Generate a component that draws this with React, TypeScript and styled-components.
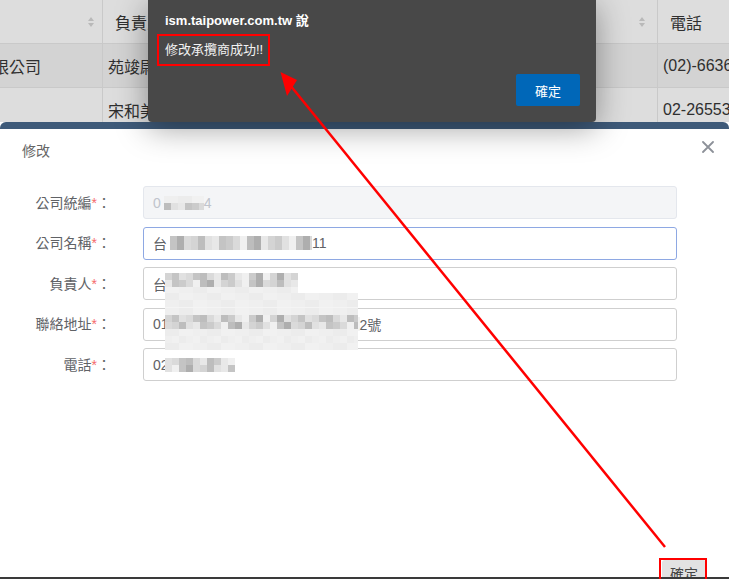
import styled, { createGlobalStyle } from 'styled-components';

const GlobalStyle = createGlobalStyle`
  html, body {
    margin: 0;
    padding: 0;
    background: #ffffff;
    overflow: hidden;
  }
  * {
    box-sizing: border-box;
  }
`;

const FONT = `"Liberation Sans", "Noto Sans CJK TC", sans-serif`;

// pixelated redaction, built as stacked rows of 7px gray cells
const TONES = ['#dadada', '#bdbdbd', '#e8e8e8', '#cbcbcb', '#f0f0f0', '#aeaeae', '#d4d4d4', '#e1e1e1', '#c4c4c4'];
const LIGHT = ['#f1f1f1', '#f6f6f6', '#ececec', '#f8f8f8', '#efefef', '#f4f4f4'];

const strip = (seed: number, count: number, tones: string[]) => {
  const stops: string[] = [];
  for (let i = 0; i < count; i++) {
    const tone = tones[(seed * 7 + i * 5 + ((i * i + seed) % 4)) % tones.length];
    stops.push(`${tone} ${i * 7}px ${(i + 1) * 7}px`);
  }
  return `linear-gradient(90deg, ${stops.join(', ')})`;
};

const mosaic = (width: number, rows: { seed: number; light?: boolean; top: number }[]) => {
  const count = Math.ceil(width / 7);
  return rows
    .map((r) => `${strip(r.seed, count, r.light ? LIGHT : TONES)} 0 ${r.top}px / 100% 7px no-repeat`)
    .join(', ');
};

const Screen = styled.div`
  position: relative;
  width: 729px;
  height: 579px;
  overflow: hidden;
  display: flex;
  flex-direction: column;
  font-family: ${FONT};
  background: #ffffff;
`;

/* ---------- dimmed table behind ---------- */

const Table = styled.div`
  height: 122px;
  flex-shrink: 0;
  overflow: hidden;
  background: #dcdcdc;
  color: #2f2f2f;
  font-size: 16px;
`;

const TableRow = styled.div<{ $striped?: boolean }>`
  display: grid;
  grid-template-columns: 103px 200px 355px 160px;
  height: 44px;
  background: ${(p) => (p.$striped ? '#d3d3d3' : '#dddddd')};
  border-bottom: 1px solid #c9c9c9;
`;

const Cell = styled.div<{ $head?: boolean; $sort?: boolean }>`
  display: flex;
  align-items: center;
  justify-content: ${(p) => (p.$sort ? 'flex-end' : 'flex-start')};
  padding-left: ${(p) => (p.$head ? '12px' : '5px')};
  padding-right: 8px;
  border-right: 1px solid #c9c9c9;
  white-space: nowrap;
  overflow: hidden;
`;

const CutText = styled.span`
  flex-shrink: 0;
  margin-left: -28px;
`;

const SortIcon = styled.span`
  display: inline-flex;
  flex-direction: column;
  gap: 2px;
  margin-right: ${(p: { $gap?: number }) => p.$gap ?? 0}px;

  &::before,
  &::after {
    content: '';
    border-left: 3.5px solid transparent;
    border-right: 3.5px solid transparent;
  }
  &::before {
    border-bottom: 4px solid #b9b9b9;
  }
  &::after {
    border-top: 4px solid #b9b9b9;
  }
`;

/* ---------- edit modal ---------- */

const Modal = styled.div`
  flex: 1;
  min-height: 0;
  display: flex;
  flex-direction: column;
  background: #ffffff;
  border-top: 7px solid #3e5a79;
  border-radius: 6px 6px 0 0;
  overflow: hidden;
`;

const ModalHeader = styled.div`
  display: flex;
  justify-content: space-between;
  align-items: flex-start;
  padding: 12px 15px 0 22px;
`;

const ModalTitle = styled.span`
  font-size: 14px;
  line-height: 20px;
  color: #666666;
`;

const CloseButton = styled.button`
  border: none;
  background: none;
  padding: 0;
  width: 12px;
  height: 12px;
  display: flex;
  cursor: pointer;
`;

const Form = styled.div`
  display: flex;
  flex-direction: column;
  gap: 7.5px;
  margin-top: 25px;
  padding-right: 52px;
`;

const FormRow = styled.div`
  display: flex;
  align-items: center;
  gap: 32px;
`;

const Label = styled.label`
  width: 111px;
  flex-shrink: 0;
  text-align: right;
  font-size: 14px;
  line-height: 20px;
  color: #606266;
  white-space: nowrap;
`;

const Required = styled.span`
  color: #f56c6c;
  font-family: 'Liberation Sans', sans-serif;
`;

const InputBox = styled.div<{ $variant?: 'disabled' | 'focus' }>`
  flex: 1;
  height: 33px;
  display: flex;
  align-items: center;
  padding: 0 9px;
  border-radius: 3px;
  font-size: 14px;
  white-space: nowrap;
  overflow: hidden;
  border: 1px solid
    ${(p) => (p.$variant === 'disabled' ? '#e4e7ed' : p.$variant === 'focus' ? '#8ea8e3' : '#cfcfcf')};
  background: ${(p) => (p.$variant === 'disabled' ? '#f4f5f7' : '#ffffff')};
  color: ${(p) => (p.$variant === 'disabled' ? '#c0c4cc' : '#606266')};
`;

const Mosaic = styled.span<{ $w: number; $h: number; $bg: string; $shift?: number }>`
  display: inline-block;
  flex-shrink: 0;
  width: ${(p) => p.$w}px;
  height: ${(p) => p.$h}px;
  margin-left: ${(p) => p.$shift ?? 0}px;
  background: ${(p) => p.$bg};
`;

const RedactionPatch = styled.div<{ $bg: string }>`
  position: absolute;
  left: 165px;
  top: 293px;
  width: 193px;
  height: 57px;
  background: ${(p) => p.$bg};
  z-index: 1;
`;

const Footer = styled.div`
  height: 17px;
  flex-shrink: 0;
  margin-top: auto;
  display: flex;
  justify-content: flex-end;
  align-items: flex-start;
  padding-right: 23px;
`;

const FooterButton = styled.button`
  height: 30px;
  padding: 4px 8px 0;
  border: none;
  border-radius: 3px;
  background: #e2e2e2;
  color: #454545;
  font-family: ${FONT};
  font-size: 14px;
  line-height: 20px;
  display: flex;
  align-items: flex-start;
`;

const BottomEdge = styled.div`
  height: 2px;
  flex-shrink: 0;
  background: #3a3a3a;
`;

/* ---------- browser alert ---------- */

const Alert = styled.div`
  position: absolute;
  left: 148px;
  top: 0;
  width: 448px;
  height: 122px;
  background: #484848;
  border-radius: 0 0 4px 4px;
  box-shadow: 0 6px 32px rgba(0, 0, 0, 0.38);
  padding: 13px 16px 0 17px;
  display: flex;
  flex-direction: column;
  color: #ffffff;
  z-index: 2;
`;

const AlertTitle = styled.div`
  font-size: 13px;
  font-weight: 700;
  line-height: 16px;
`;

const AlertMessage = styled.div`
  font-size: 13px;
  line-height: 16px;
  margin-top: 13px;
  color: #f2f2f2;
`;

const AlertActions = styled.div`
  display: flex;
  justify-content: flex-end;
  margin-top: 16px;
`;

const AlertButton = styled.button`
  width: 64px;
  height: 32px;
  border: none;
  border-radius: 2px;
  background: #0067b8;
  color: #ffffff;
  font-family: ${FONT};
  font-size: 13px;
`;

const Annotations = styled.svg`
  position: absolute;
  left: 0;
  top: 0;
  z-index: 3;
  pointer-events: none;
`;

const CloseIcon = () => (
  <svg width="12" height="12" viewBox="0 0 12 12" fill="none">
    <path d="M1 1L11 11M11 1L1 11" stroke="#8d9199" strokeWidth="1.8" strokeLinecap="round" />
  </svg>
);

const patchBg = [
  mosaic(193, [
    { seed: 3, top: 22 },
    { seed: 5, top: 29 },
    { seed: 1, light: true, top: 0 },
    { seed: 2, light: true, top: 7 },
    { seed: 4, light: true, top: 15 },
    { seed: 6, light: true, top: 36 },
    { seed: 7, light: true, top: 43 },
    { seed: 8, light: true, top: 50 },
  ]),
  '#f4f4f4',
].join(', ');

const App = () => {
  return (
    <Screen>
      <GlobalStyle />

      <Table>
        <TableRow>
          <Cell $sort>
            <SortIcon />
          </Cell>
          <Cell $head>負責人</Cell>
          <Cell $sort>
            <SortIcon $gap={4} />
          </Cell>
          <Cell $head>電話</Cell>
        </TableRow>
        <TableRow $striped>
          <Cell>
            <CutText>有限公司</CutText>
          </Cell>
          <Cell>苑竣尉</Cell>
          <Cell />
          <Cell>(02)-66368888</Cell>
        </TableRow>
        <TableRow>
          <Cell />
          <Cell>宋和美</Cell>
          <Cell />
          <Cell>02-26553001</Cell>
        </TableRow>
      </Table>

      <Modal>
        <ModalHeader>
          <ModalTitle>修改</ModalTitle>
          <CloseButton aria-label="close">
            <CloseIcon />
          </CloseButton>
        </ModalHeader>

        <Form>
          <FormRow>
            <Label>
              公司統編<Required>*</Required>：
            </Label>
            <InputBox $variant="disabled">
              0
              <Mosaic
                $w={40}
                $h={14}
                $shift={3}
                $bg={mosaic(40, [
                  { seed: 2, light: true, top: 0 },
                  { seed: 4, top: 7 },
                ])}
              />
              4
            </InputBox>
          </FormRow>
          <FormRow>
            <Label>
              公司名稱<Required>*</Required>：
            </Label>
            <InputBox $variant="focus">
              台
              <Mosaic
                $w={142}
                $h={14}
                $shift={3}
                $bg={mosaic(142, [
                  { seed: 1, top: 0 },
                  { seed: 6, top: 7 },
                ])}
              />
              11
            </InputBox>
          </FormRow>
          <FormRow>
            <Label>
              負責人<Required>*</Required>：
            </Label>
            <InputBox>
              台
              <Mosaic
                $w={133}
                $h={21}
                $shift={-2}
                $bg={mosaic(133, [
                  { seed: 3, top: 0 },
                  { seed: 8, top: 7 },
                  { seed: 5, light: true, top: 14 },
                ])}
              />
            </InputBox>
          </FormRow>
          <FormRow>
            <Label>
              聯絡地址<Required>*</Required>：
            </Label>
            <InputBox>
              01
              <Mosaic $w={195} $h={14} $shift={-4} $bg="#f4f4f4" />
              2號
            </InputBox>
          </FormRow>
          <FormRow>
            <Label>
              電話<Required>*</Required>：
            </Label>
            <InputBox>
              02
              <Mosaic
                $w={70}
                $h={14}
                $shift={-4}
                $bg={mosaic(70, [
                  { seed: 7, top: 0 },
                  { seed: 2, top: 7 },
                ])}
              />
            </InputBox>
          </FormRow>
        </Form>

        <Footer>
          <FooterButton>確定</FooterButton>
        </Footer>
      </Modal>
      <BottomEdge />

      <RedactionPatch $bg={patchBg} />

      <Alert>
        <AlertTitle>ism.taipower.com.tw 說</AlertTitle>
        <AlertMessage>修改承攬商成功!!</AlertMessage>
        <AlertActions>
          <AlertButton>確定</AlertButton>
        </AlertActions>
      </Alert>

      <Annotations width="729" height="579" viewBox="0 0 729 579">
        <rect x="158" y="35" width="111" height="30" fill="none" stroke="#ff0000" strokeWidth="2" />
        <line x1="665" y1="547" x2="290" y2="85" stroke="#ff0000" strokeWidth="2.5" />
        <polygon points="280.5,72 297,80 287,96" fill="#ff0000" />
        <rect x="660" y="559" width="46" height="30" fill="none" stroke="#ff0000" strokeWidth="2" />
      </Annotations>
    </Screen>
  );
};

export default App;
